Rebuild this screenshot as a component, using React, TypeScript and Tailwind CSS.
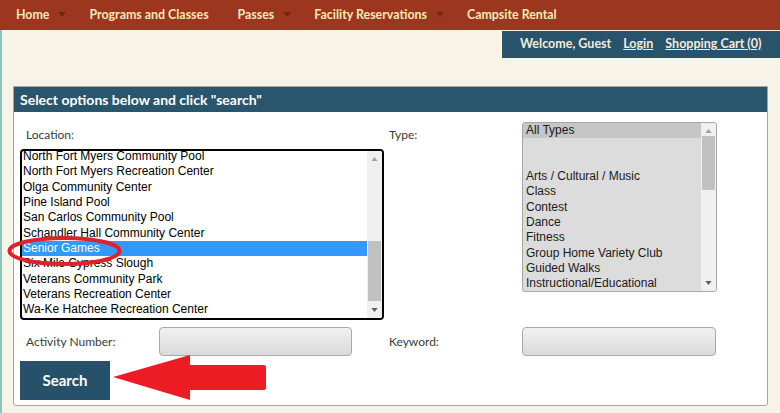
import React from "react";

// ─────────────────────────────────────────────────────────────────────────────
// Data
// ─────────────────────────────────────────────────────────────────────────────

const navItems: { label: string; caret: boolean }[] = [
  { label: "Home",                  caret: true  },
  { label: "Programs and Classes",  caret: false },
  { label: "Passes",                caret: true  },
  { label: "Facility Reservations", caret: true  },
  { label: "Campsite Rental",       caret: false },
];

const locations = [
  "North Fort Myers Community Pool",
  "North Fort Myers Recreation Center",
  "Olga Community Center",
  "Pine Island Pool",
  "San Carlos Community Pool",
  "Schandler Hall Community Center",
  "Senior Games",
  "Six Mile Cypress Slough",
  "Veterans Community Park",
  "Veterans Recreation Center",
  "Wa-Ke Hatchee Recreation Center",
];

const types = [
  "All Types",
  "",
  "",
  "Arts / Cultural / Music",
  "Class",
  "Contest",
  "Dance",
  "Fitness",
  "Group Home Variety Club",
  "Guided Walks",
  "Instructional/Educational",
];

const uiFont = { fontFamily: "Lato, 'Open Sans', sans-serif" };
const listFont = { fontFamily: "'Liberation Sans', Arial, sans-serif" };

// ─────────────────────────────────────────────────────────────────────────────
// Bits
// ─────────────────────────────────────────────────────────────────────────────

function Caret() {
  return (
    <svg viewBox="0 0 8 5" className="ml-[9px] h-[5px] w-[8px]">
      <path d="M0 0H8L4 5Z" fill="#6e2814" />
    </svg>
  );
}

function Scrollbar({ thumbTop, thumbHeight }: { thumbTop: number; thumbHeight: number }) {
  return (
    <div className="flex w-[15px] shrink-0 flex-col items-center bg-[#f0f0f0]">
      <svg viewBox="0 0 8 5" className="mt-[6px] h-[4px] w-[7px]">
        <path d="M0 5H8L4 0Z" fill="#a3a3a3" />
      </svg>
      <div className="relative w-full flex-1">
        <div
          className="absolute left-[1px] right-[1px] bg-[#c1c1c1]"
          style={{ top: thumbTop, height: thumbHeight }}
        />
      </div>
      <svg viewBox="0 0 8 5" className="mb-[6px] h-[4px] w-[7px]">
        <path d="M0 0H8L4 5Z" fill="#606060" />
      </svg>
    </div>
  );
}

function TextBox({ width }: { width: string }) {
  return (
    <div
      className={`${width} h-[29px] rounded-[4px] border border-[#a9a9a9] bg-gradient-to-b from-[#f1f1f1] to-[#dadada]`}
    />
  );
}

// ─────────────────────────────────────────────────────────────────────────────
// App
// ─────────────────────────────────────────────────────────────────────────────

export default function App() {
  return (
    <div className="relative h-[413px] w-[780px] overflow-hidden bg-[#f7f3e7]" style={uiFont}>
      {/* Top nav */}
      <nav className="flex h-[30px] items-center bg-[#9c361f] pl-[16px] text-[12.4px] font-bold text-[#f7e8b4]">
        {navItems.map(({ label, caret }) => (
          <div key={label} className="mr-[23px] flex items-center">
            <span className={caret ? "" : "mr-[6px]"}>{label}</span>
            {caret && <Caret />}
          </div>
        ))}
      </nav>

      <div className="flex h-[383px] flex-col border-l-2 border-[#8fc3b8]">
        {/* Welcome bar */}
        <div className="mt-px flex justify-end">
          <div className="flex h-[27px] w-[278px] items-center gap-[12px] bg-[#28536a] pl-[18px] text-[12.5px] font-bold text-[#f2ecda]">
            <span>Welcome, Guest</span>
            <span className="underline">Login</span>
            <span className="underline">Shopping Cart (0)</span>
          </div>
        </div>

        {/* Search panel */}
        <section className="mt-[28px] ml-[11px] mr-[12px] h-[320px] overflow-hidden rounded-b-[3px] border border-[#a5a5a5] bg-white">
          <header className="flex h-[25px] items-center bg-[#2a566d] pl-[6px] text-[14px] font-bold text-white">
            Select options below and click "search"
          </header>

          <div className="pl-[6px] pt-[10px]">
            {/* Location / Type */}
            <div className="flex">
              <div className="flex w-[364px] flex-col">
                <span className="mt-[6px] pl-[6px] text-[12px] leading-[14px] text-[#3a3a3a]">Location:</span>
                <div className="mt-[7px] flex h-[171px] overflow-hidden rounded-[4px] border-2 border-black bg-white">
                  <div className="flex-1 overflow-hidden pt-[1px]">
                    <div className="-mt-[3px] text-[12px] leading-[15.35px] text-black" style={listFont}>
                      {locations.map((loc) => (
                        <div
                          key={loc}
                          className={loc === "Senior Games" ? "bg-[#3399ff] pl-[1px] text-white" : "pl-[1px]"}
                        >
                          {loc}
                        </div>
                      ))}
                    </div>
                  </div>
                  <Scrollbar thumbTop={80} thumbHeight={60} />
                </div>
              </div>

              <span className="ml-[5px] mt-[6px] w-[133px] text-[12px] leading-[14px] text-[#3a3a3a]">Type:</span>

              <div className="flex h-[170px] w-[195px] overflow-hidden rounded-[3px] border border-[#a6a6a6] bg-[#dcdcdc]">
                <div className="flex-1 text-[12px] leading-[15.35px] text-[#1a1a1a]" style={listFont}>
                  {types.map((t, i) => (
                    <div key={i} className={i === 0 ? "h-[15.35px] bg-[#c6c6c6] pl-[3px]" : "h-[15.35px] pl-[3px]"}>
                      {t}
                    </div>
                  ))}
                </div>
                <Scrollbar thumbTop={3} thumbHeight={54} />
              </div>
            </div>

            {/* Activity number / Keyword */}
            <div className="mt-[7px] flex items-center text-[12px] text-[#3a3a3a]">
              <span className="w-[139px] pl-[6px]">Activity Number:</span>
              <TextBox width="w-[193px]" />
              <span className="ml-[37px] w-[133px]">Keyword:</span>
              <TextBox width="w-[194px]" />
            </div>

            {/* Search */}
            <button className="mt-[5px] flex h-[39px] w-[90px] items-center justify-center bg-[#27516a] text-[15px] font-bold text-white">
              Search
            </button>
          </div>
        </section>
      </div>

      {/* Annotations drawn over the screenshot */}
      <svg className="pointer-events-none absolute left-0 top-0" width="780" height="413" viewBox="0 0 780 413">
        <ellipse cx="64.5" cy="251" rx="55" ry="13" fill="none" stroke="#e0202a" strokeWidth="4" />
        <path
          d="M113 377 L190 355 L190 365 L264 365 Q266 365 266 367 L266 388 Q266 390 264 390 L190 390 L190 400 Z"
          fill="#ed1c24"
        />
      </svg>
    </div>
  );
}
